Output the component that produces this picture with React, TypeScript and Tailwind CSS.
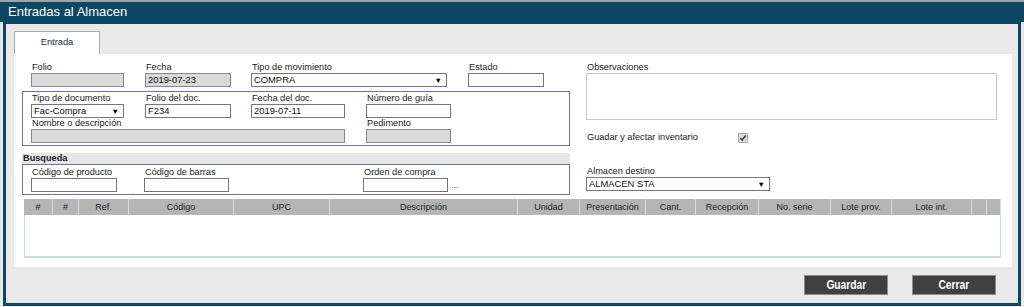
import React from "react";

const LBL = "h-[12px] leading-[12px] text-[9.2px] text-[#1a1a1a] pl-[1px] whitespace-nowrap";
const INP = "h-[14px] border border-[#777] bg-white text-[9.4px] leading-[12px] pl-[2px] text-[#111] whitespace-nowrap overflow-hidden";
const INPG = "h-[14px] border border-[#888] bg-[#d9d9d9] text-[9.4px] leading-[12px] pl-[2px] text-[#111] whitespace-nowrap overflow-hidden";
const BOX = "border border-[#6f72a0]";
const BTN = "w-[84px] h-[20px] bg-[#404040] border border-[#8c8c8c] text-white font-bold text-[12.5px] flex items-center justify-center";

function Field({ label, w, colW, value, gray, select, lblH = 12 }: { label: string; w: number; colW?: number; value?: string; gray?: boolean; select?: boolean; lblH?: number }) {
  return (
    <div style={{ width: colW ?? w }} className="shrink-0">
      <div className={LBL} style={{ height: lblH, lineHeight: `${lblH}px` }}>{label}</div>
      <div style={{ width: w }} className={`${gray ? INPG : INP} flex items-center justify-between pr-[4px]`}>
        <span>{value ?? ""}</span>
        {select && <span className="text-[7.5px] leading-[7px] text-black">▼</span>}
      </div>
    </div>
  );
}

const cols: [string, number][] = [
  ["#", 29], ["#", 26], ["Ref.", 50], ["Código", 105], ["UPC", 96], ["Descripción", 188], ["Unidad", 62],
  ["Presentación", 66], ["Cant.", 50], ["Recepción", 63], ["No. serie", 72], ["Lote prov.", 61], ["Lote int.", 80], ["", 15], ["", 14],
];

export default function App() {
  return (
    <div className="w-[1024px] h-[307px] overflow-hidden flex flex-col bg-[#e9e9e9] font-['Liberation_Sans',Arial,sans-serif]">
      <div className="h-[2px] bg-[#a3a3a3] shrink-0" />
      <div className="h-[20px] shrink-0 bg-[#0d4764] text-white text-[13px] leading-[20px] pl-[8px]">Entradas al Almacen</div>
      <div className="flex-1 px-[3px] pb-[1px] flex flex-col">
        <div className="flex-1 border-[3px] border-t-[2px] border-[#0d4764] bg-[#e9e9e9] pl-[8px] pr-[6px] pt-[7px] flex flex-col">
          {/* tab */}
          <div className="flex">
            <div className="w-[86px] h-[23px] border border-b-0 border-[#a9a9a9] bg-white text-[9.3px] text-[#14304d] flex items-center justify-center">Entrada</div>
          </div>
          {/* card */}
          <div className="bg-white h-[213px] pl-[10px] pt-[7px] flex flex-col">
            <div className="flex">
              {/* left column */}
              <div className="w-[548px] ml-[-2px] shrink-0 flex flex-col">
                <div className="flex pl-[9px]">
                  <Field label="Folio" w={93} colW={114} gray />
                  <Field label="Fecha" w={86} colW={106} gray value="2019-07-23" />
                  <Field label="Tipo de movimiento" w={196} colW={217} value="COMPRA" select />
                  <Field label="Estado" w={76} />
                </div>
                <div className={`${BOX} mt-[4px] pl-[8px] pb-[2px] flex flex-col`}>
                  <div className="flex">
                    <Field label="Tipo de documento" w={93} colW={114} value="Fac-Compra" select />
                    <Field label="Folio del doc." w={86} colW={106} value="F234" />
                    <Field label="Fecha del doc." w={94} colW={115} value="2019-07-11" />
                    <Field label="Número de guía" w={85} />
                  </div>
                  <div className="flex">
                    <Field label="Nombre o descripción" w={314} colW={335} gray lblH={11} />
                    <Field label="Pedimento" w={85} gray lblH={11} />
                  </div>
                </div>
                <div className="mt-[7px] h-[11px] bg-[#e6e6e6] pl-[1px] text-[9.2px] leading-[11px] font-bold text-[#222]">Busqueda</div>
                <div className={`${BOX} pl-[8px] pt-[1px] pb-[2px] flex`}>
                  <Field label="Código de producto" w={86} colW={113} />
                  <Field label="Código de barras" w={85} colW={219} />
                  <div className="shrink-0">
                    <div className={LBL}>Orden de compra</div>
                    <div className="flex items-end">
                      <div className={`${INP} w-[85px]`} />
                      <span className="ml-[3px] mb-[2px] text-[9px] leading-[9px] text-[#5a4fd0]">...</span>
                    </div>
                  </div>
                </div>
              </div>
              {/* right column */}
              <div className="ml-[16px] w-[411px] shrink-0 flex flex-col">
                <div className={LBL}>Observaciones</div>
                <div className="h-[47px] border border-[#c9c9c9] bg-white" />
                <div className="mt-[12px] h-[12px] flex items-center">
                  <div className="w-[152px] text-[9.2px] text-[#1a1a1a] pl-[1px]">Guadar y afectar inventario</div>
                  <div className="w-[10px] h-[10px] border border-[#a8a8a8] bg-[#dcdcdc] rounded-[1px] flex items-center justify-center">
                    <svg width="8" height="8" viewBox="0 0 8 8"><path d="M1.3 4.2 L3.1 6 L6.8 1.6" stroke="#333" strokeWidth="1.5" fill="none" /></svg>
                  </div>
                </div>
                <div className="mt-[21px]">
                  <Field label="Almacen destino" w={184} value="ALMACEN STA" select />
                </div>
              </div>
            </div>
            {/* table */}
            <div className="mt-[4px] w-[977px] flex flex-col">
              <div className="flex h-[16px] bg-[#b5b5b5]">
                {cols.map(([t, w], i) => (
                  <div key={i} style={{ width: w }} className="shrink-0 border-r border-[#d3e2df] text-[9px] leading-[16px] text-center text-[#222] whitespace-nowrap overflow-hidden">{t}</div>
                ))}
              </div>
              <div className="h-[43px] bg-white border-l border-r border-b-2 border-[#c9deda]" />
            </div>
          </div>
          {/* buttons */}
          <div className="mt-[8px] flex justify-end gap-[24px] pr-[16px]">
            <div className={BTN}><span className="inline-block scale-x-[0.82]">Guardar</span></div>
            <div className={BTN}><span className="inline-block scale-x-[0.82]">Cerrar</span></div>
          </div>
        </div>
      </div>
    </div>
  );
}
